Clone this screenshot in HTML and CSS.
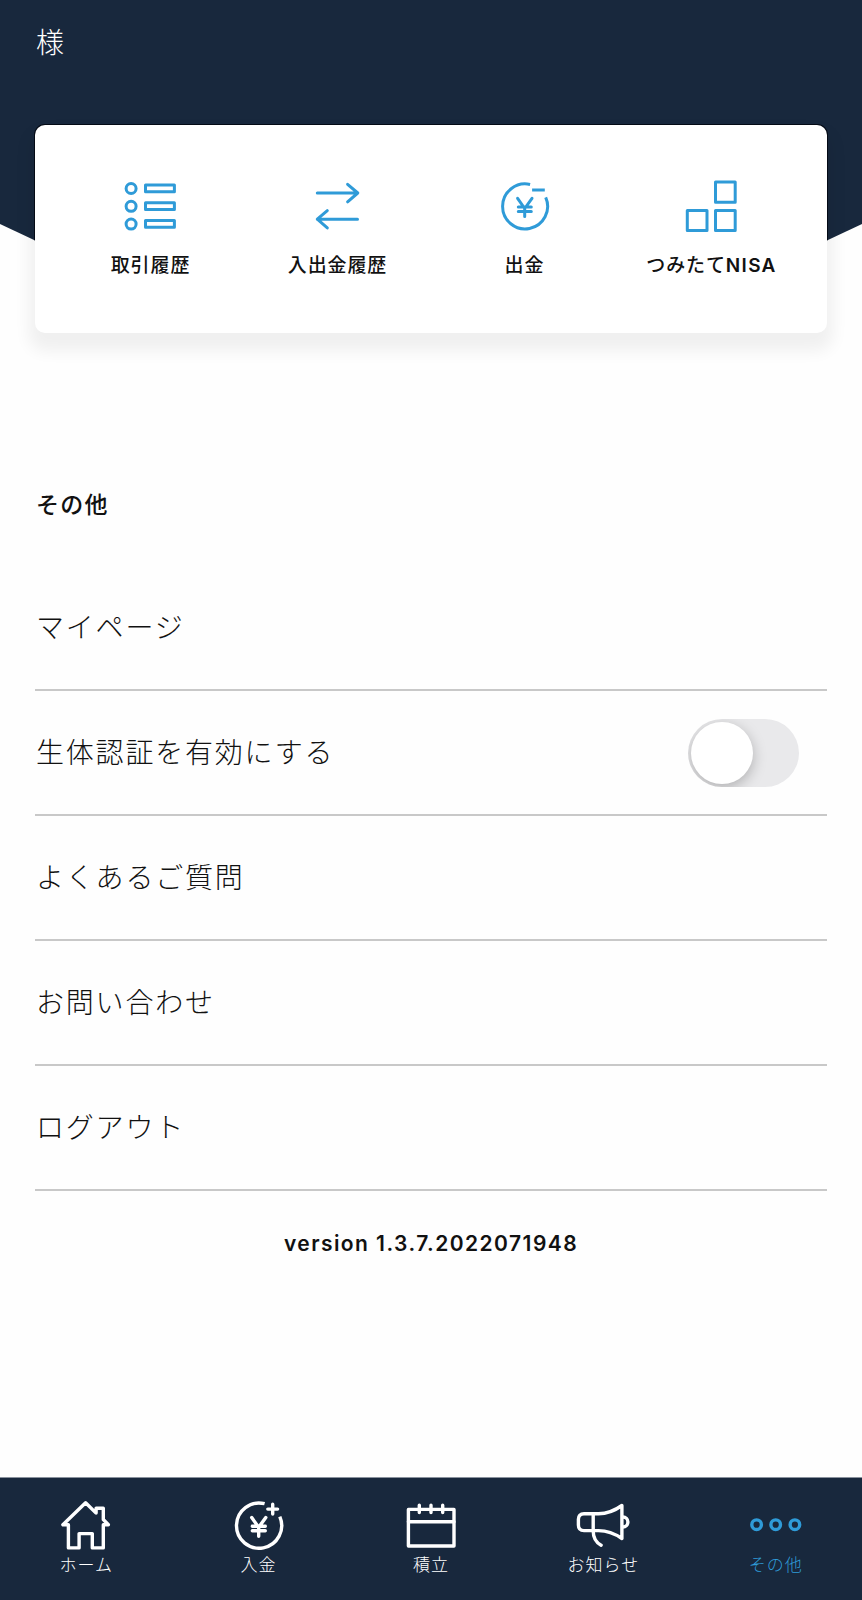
FILE: index.html
```html
<!DOCTYPE html>
<html lang="ja">
<head>
    <meta charset="UTF-8">
    <meta name="viewport" content="width=device-width, initial-scale=1.0">
    <title>その他</title>
    <link rel="stylesheet" href="styles.css">
</head>
<body>
    <header class="header">
        <div class="header-bg"></div>
        <p class="user-name">様</p>
        <div class="menu-card">
            <a class="menu-item">
                <svg class="icon" viewBox="0.7 0 60 60">
                    <circle cx="10.8" cy="12.5" r="5"/>
                    <circle cx="10.8" cy="30.3" r="5"/>
                    <circle cx="10.8" cy="48.1" r="5"/>
                    <rect x="25.2" y="9.1" width="28.9" height="6.7"/>
                    <rect x="25.2" y="26.7" width="28.9" height="6.7"/>
                    <rect x="25.2" y="44.5" width="28.9" height="6.7"/>
                </svg>
                <span>取引履歴</span>
            </a>
            <a class="menu-item">
                <svg class="icon" viewBox="0.7 0 60 60">
                    <path d="M10 17H50.5M40.3 8.3L50.5 17L40.3 25.8"/>
                    <path d="M50.2 43.2H10M20 34.7L10 43.2L20 51.9"/>
                </svg>
                <span>入出金履歴</span>
            </a>
            <a class="menu-item">
                <svg class="icon" viewBox="0.7 0 60 60">
                    <path class="butt" d="M35.8 8.5A22.5 22.5 0 1 0 51.4 21.4"/>
                    <path class="butt" d="M37.8 14H50.5"/>
                    <path d="M23.3 22.3L30.4 32.5L37.7 22.3M30.4 32.5V40.6M24 31H37M24 35.4H37"/>
                </svg>
                <span>出金</span>
            </a>
            <a class="menu-item">
                <svg class="icon" viewBox="0.7 0 60 60">
                    <rect x="34.2" y="6" width="19.7" height="20.2"/>
                    <rect x="34.2" y="34.4" width="19.7" height="20.2"/>
                    <rect x="6" y="34.4" width="19.7" height="20.2"/>
                </svg>
                <span>つみたて<b>NISA</b></span>
            </a>
        </div>
    </header>

    <main class="content">
        <h2>その他</h2>
        <ul class="list">
            <li>マイページ</li>
            <li>
                生体認証を有効にする
                <span class="switch"><span class="knob"></span></span>
            </li>
            <li>よくあるご質問</li>
            <li>お問い合わせ</li>
            <li>ログアウト</li>
        </ul>
        <p class="version">version 1.3.7.2022071948</p>
    </main>

    <nav class="tab-bar">
        <a class="tab">
            <svg class="icon" viewBox="0.5 0.5 60 60">
                <path d="M30.1 8.2L7.4 30.2H12.9V53.4H23.6V39.1H36.8V53.4H47.8V30.2H52.9L47.8 25V13.7H40.6V18.6Z"/>
            </svg>
            <span>ホーム</span>
        </a>
        <a class="tab">
            <svg class="icon" viewBox="0.7 0 60 60">
                <path class="butt" d="M36.3 8.7A22.6 22.6 0 1 0 51.5 21.6"/>
                <path d="M44.4 9.2V19M39.5 14.1H49.3"/>
                <path d="M23.4 22.6L30.4 32.3L37.5 22.6M30.4 32.3V41.3M24 31.3H37M24 35.8H37"/>
            </svg>
            <span>入金</span>
        </a>
        <a class="tab">
            <svg class="icon" viewBox="0 0 60 60">
                <rect x="7.4" y="14.4" width="45.6" height="36.6"/>
                <path d="M7.4 26.7H53M18.3 10.3V17.5M30 10.3V17.5M41.7 10.3V17.5"/>
            </svg>
            <span>積立</span>
        </a>
        <a class="tab">
            <svg class="icon" viewBox="0.5 0 60 60">
                <path d="M49.4 10.5Q38 18.7 26 18.7H11.5Q5.9 18.7 5.9 24.3V30Q5.9 35.6 11.5 35.6H26Q38 35.6 49.4 43.5Z"/>
                <path d="M20.7 18.7V36Q20.7 46 28.6 50.2"/>
                <path d="M50.4 22A5 5 0 0 1 50.4 32"/>
            </svg>
            <span>お知らせ</span>
        </a>
        <a class="tab active">
            <svg class="icon" viewBox="0.3 0 60 60">
                <circle cx="10.9" cy="29.7" r="4.8"/>
                <circle cx="30" cy="29.7" r="4.8"/>
                <circle cx="49.2" cy="29.7" r="4.8"/>
            </svg>
            <span>その他</span>
        </a>
    </nav>
</body>
</html>
```
FILE: styles.css
```css
* {
    box-sizing: border-box;
}

body {
    margin: 0;
    height: 1600px;
    display: flex;
    flex-direction: column;
    background: #fefefe;
    color: #111;
    font-family: 'Inter', 'Noto Sans CJK JP', sans-serif;
}

.header {
    position: relative;
    height: 333px;
    padding: 0 35px;
}

/* Navy background, its lower corners are cut off diagonally */
.header-bg {
    position: absolute;
    inset: 0 0 auto;
    height: 255px;
    background: #18283d;
    clip-path: polygon(0 0, 100% 0, 100% 224px, 796px 255px, 66px 255px, 0 224px);
}

/* Thin dark edge round the card, only visible on the navy */
.header-bg::after {
    content: '';
    position: absolute;
    top: 124px;
    left: 34px;
    right: 34px;
    height: 210px;
    border-radius: 11px;
    background: #050b16;
}

.user-name {
    position: relative;
    margin: 0;
    height: 125px;
    padding: 23px 0 0 1px;
    color: #fff;
    font-size: 28px;
    font-weight: 300;
    line-height: 40px;
}

.menu-card {
    position: relative;
    display: grid;
    grid-template-columns: repeat(4, 1fr);
    height: 208px;
    padding: 51px 22px 0;
    background: #fff;
    border-radius: 10px;
    box-shadow: 0 12px 16px 6px rgba(0, 0, 0, 0.06);
}

.menu-item {
    display: flex;
    flex-direction: column;
    align-items: center;
    gap: 15px;
    font-size: 19px;
    font-weight: 500;
    letter-spacing: 0.9px;
    line-height: 30px;
    white-space: nowrap;
}

.menu-item b {
    font-weight: 600;
    letter-spacing: 1.3px;
}

.icon {
    width: 60px;
    height: 60px;
    fill: none;
    stroke: #2f9bd8;
    stroke-width: 3;
    stroke-linecap: round;
    stroke-linejoin: round;
}

.icon .butt {
    stroke-linecap: butt;
}

.content {
    flex: 1;
    padding: 152px 35px 0;
}

h2 {
    margin: 0;
    height: 81px;
    padding-left: 1px;
    font-size: 23px;
    font-weight: 500;
    letter-spacing: 1.3px;
    line-height: 40px;
}

.list {
    margin: 0;
    padding: 0;
    list-style: none;
}

.list li {
    display: flex;
    align-items: center;
    justify-content: space-between;
    height: 125px;
    padding: 0 28px 3px 1px;
    border-bottom: 2px solid #c8c8c8;
    font-size: 28px;
    font-weight: 300;
    letter-spacing: 1.8px;
}

.switch {
    width: 111px;
    height: 68px;
    margin-top: 3px;
    padding: 3px;
    border-radius: 34px;
    background: #e9e9eb;
    overflow: hidden;
}

.knob {
    display: block;
    width: 62px;
    height: 62px;
    border-radius: 50%;
    background: #fff;
    box-shadow: 0 4px 14px rgba(0, 0, 0, 0.25);
}

.version {
    margin: 33px 0 0;
    font-size: 21px;
    font-weight: 600;
    letter-spacing: 1.45px;
    line-height: 40px;
    text-align: center;
}

.tab-bar {
    display: grid;
    grid-template-columns: repeat(5, 1fr);
    height: 123px;
    padding-top: 17px;
    border-top: 1px solid #8a929d;
    background: #18283d;
}

.tab {
    display: flex;
    flex-direction: column;
    align-items: center;
    color: #fff;
    font-size: 17px;
    font-weight: 300;
    letter-spacing: 1px;
    line-height: 20px;
}

.tab .icon {
    stroke: #fff;
    stroke-width: 3.4;
}

.tab.active {
    color: #2f9bd8;
}

.tab.active .icon {
    stroke: #2f9bd8;
}
```
